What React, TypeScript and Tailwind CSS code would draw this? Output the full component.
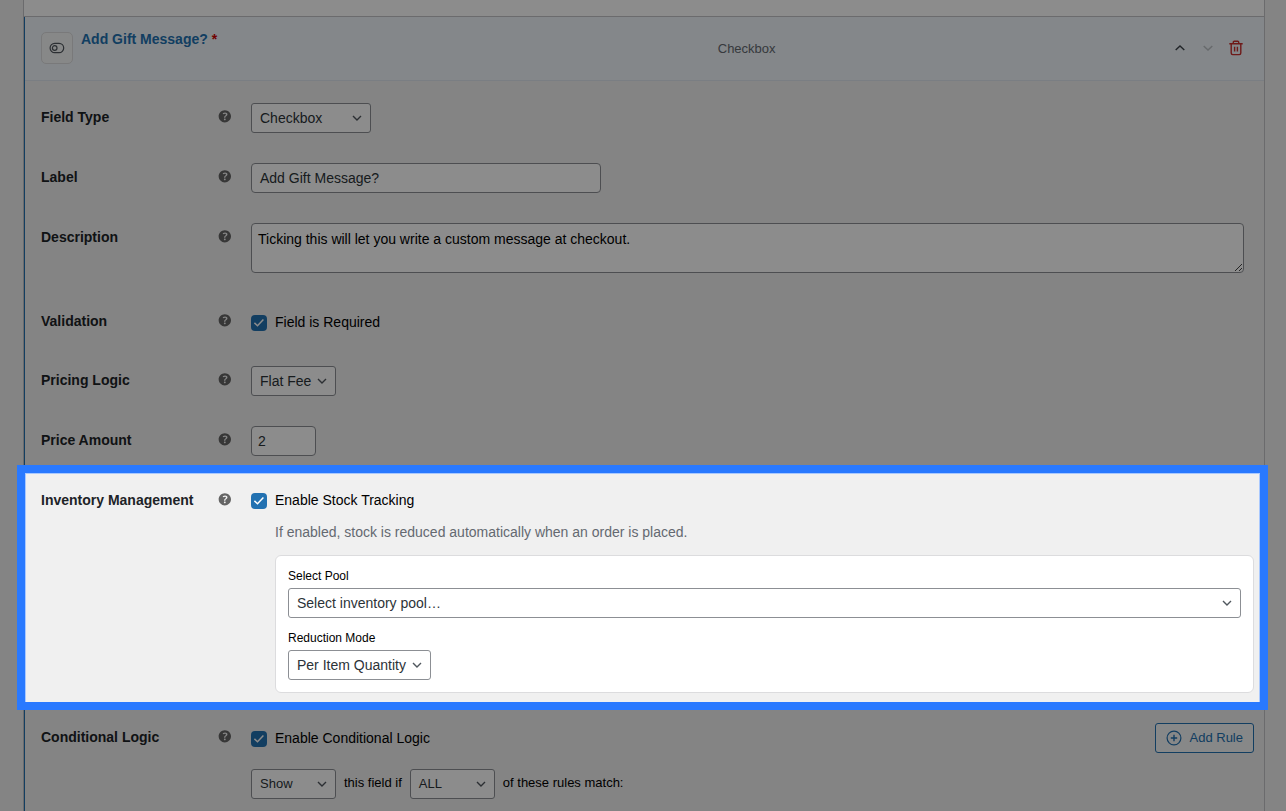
import type { ReactNode } from 'react';

function HelpIcon() {
  return (
    <svg viewBox="0 -0.6 20.4 20.4" className="mt-1 ml-[-3px] h-[18px] w-[18px]" fill="#646464">
      <path d="M17 10c0-3.87-3.14-7-7-7-3.87 0-7 3.13-7 7s3.13 7 7 7c3.86 0 7-3.13 7-7zm-6.3 1.48H9.14v-.43c0-.38.08-.7.24-.98s.46-.57.88-.89c.41-.29.68-.53.81-.71.14-.18.2-.39.2-.62 0-.25-.09-.44-.28-.58-.19-.13-.45-.19-.79-.19-.58 0-1.25.19-2 .57l-.64-1.28c.87-.49 1.8-.74 2.77-.74.81 0 1.45.2 1.92.58.48.39.71.91.71 1.55 0 .43-.09.8-.29 1.11-.19.32-.57.67-1.11 1.06-.38.28-.61.49-.71.63-.1.15-.15.34-.15.57v.35zm-1.47 2.74c-.18-.17-.27-.42-.27-.73 0-.33.08-.58.26-.75s.43-.25.77-.25c.32 0 .57.09.75.26s.27.42.27.74c0 .3-.09.55-.27.72-.18.18-.43.27-.75.27-.33 0-.58-.09-.76-.26z" />
    </svg>
  );
}

function Chevron() {
  return (
    <svg viewBox="0 0 16 16" className="h-4 w-4 shrink-0" fill="none" stroke="#50575e" strokeWidth="1.4">
      <path d="M4 6l4 4 4-4" />
    </svg>
  );
}

function Select({ children, className }: { children: ReactNode; className: string }) {
  return (
    <div
      className={`flex h-[30px] shrink-0 items-center justify-between rounded-[3px] border border-[#8c8f94] bg-white pl-2 pr-[5px] whitespace-nowrap text-[#2c3338] ${className}`}
    >
      <span>{children}</span>
      <Chevron />
    </div>
  );
}

function Check({ children, className }: { children: ReactNode; className: string }) {
  return (
    <div className={`flex h-5 items-center gap-2 leading-5 text-black ${className}`}>
      <span className="mt-[2px] flex h-4 w-4 items-center justify-center rounded-[4px] bg-[#2271b1]">
        <svg viewBox="0 0 16 16" className="h-4 w-4" fill="none" stroke="#fff" strokeWidth="1.5">
          <path d="M3.4 7.9l3.1 2.8 5.9-6.1" />
        </svg>
      </span>
      <span>{children}</span>
    </div>
  );
}

function Row({ label, className, children }: { label: string; className: string; children: ReactNode }) {
  return (
    <div className={`grid grid-cols-[178px_32px_1fr] items-start ${className}`}>
      <div className="pt-1 font-bold leading-5 text-[#1d2327]">{label}</div>
      <HelpIcon />
      <div className="min-w-0">{children}</div>
    </div>
  );
}

export default function App() {
  return (
    <div className="relative h-[811px] w-[1286px] overflow-hidden bg-[#f0f0f0] pl-[23px] pr-[21px] font-['Liberation_Sans',Arial,sans-serif] text-[14px]">
      <div className="flex h-full flex-col border-x border-[#c3c4c7]">
        <div className="h-4 shrink-0 bg-white" />
        <div className="h-px shrink-0 bg-[#c3c4c7]" />
        <div className="min-h-0 flex-1 border-l border-[#2271b1]">
          <header className="flex h-16 items-center border-b border-[#dfe5ee] bg-[#f0f6fb] pb-px pl-4 pr-5">
            <div className="flex h-8 w-8 shrink-0 items-center justify-center rounded-[5px] border border-[#dcdcde] bg-[#f6f7f7]">
              <svg viewBox="0 0 16 12" className="h-3 w-4" fill="none" stroke="#50575e" strokeWidth="1.2">
                <rect x="1.1" y="1.3" width="13.6" height="9.4" rx="4.7" />
                <circle cx="5.7" cy="6" r="2.3" />
              </svg>
            </div>
            <div className="ml-2 w-[636.75px] shrink-0 self-start pt-3 font-bold leading-5 text-[#2271b1]">
              Add Gift Message? <span className="text-[#d00000]">*</span>
            </div>
            <div className="flex-1 pt-px text-[13px] leading-5 text-[#646970]">Checkbox</div>
            <div className="flex items-center gap-3">
              <svg viewBox="0 0 16 16" className="h-4 w-4" fill="none" stroke="#3c434a" strokeWidth="1.4">
                <path d="M3.7 10L8 5.9l4.3 4.1" />
              </svg>
              <svg viewBox="0 0 16 16" className="h-4 w-4" fill="none" stroke="#bcc1c5" strokeWidth="1.4">
                <path d="M3.7 6L8 10.1 12.3 6" />
              </svg>
              <svg viewBox="0 0 16 16" className="h-4 w-4" fill="none" stroke="#c9302f" strokeWidth="1.4">
                <path d="M1.3 3.8h13.4M5.3 3.8V2.2q0-.9.9-.9h3.6q.9 0 .9.9v1.6M3.2 3.8v9.3q0 1.5 1.5 1.5h6.6q1.5 0 1.5-1.5V3.8M6.6 6.8v4.8M9.4 6.8v4.8" />
              </svg>
            </div>
          </header>

          <div className="pl-4 pr-[10px] pt-[22px]">
            <Row label="Field Type" className="h-[60px]">
              <Select className="w-[120px]">Checkbox</Select>
            </Row>
            <Row label="Label" className="h-[60px]">
              <div className="flex h-[30px] w-[350px] items-center rounded-[4px] border border-[#8c8f94] bg-white px-2 text-[#2c3338]">
                Add Gift Message?
              </div>
            </Row>
            <Row label="Description" className="h-[84px]">
              <div className="mr-[10px] flex h-[50px] rounded-[4px] border border-[#8c8f94] bg-white pl-[6px] pt-[5px] leading-5 text-black">
                <span className="flex-1">Ticking this will let you write a custom message at checkout.</span>
                <svg viewBox="0 0 9 9" className="h-[9px] w-[9px] self-end" fill="none" stroke="#444" strokeWidth="1">
                  <path d="M1 8l7-7M5 8l3-3" />
                </svg>
              </div>
            </Row>
            <Row label="Validation" className="h-[59px]">
              <Check className="mt-[5px]">Field is Required</Check>
            </Row>
            <Row label="Pricing Logic" className="h-[60px]">
              <Select className="w-[85px]">Flat Fee</Select>
            </Row>
            <Row label="Price Amount" className="h-[60px]">
              <div className="flex h-[30px] w-[65px] items-center rounded-[4px] border border-[#8c8f94] bg-white px-[6px] text-[#2c3338]">
                2
              </div>
            </Row>
            <Row label="Inventory Management" className="h-[237px]">
              <Check className="mt-1">Enable Stock Tracking</Check>
              <div className="ml-6 mt-3 leading-5 text-[#646970]">
                If enabled, stock is reduced automatically when an order is placed.
              </div>
              <div className="ml-6 mt-[13px] h-[138px] rounded-[6px] border border-[#dcdcde] bg-white p-3 text-black">
                <div className="mb-1 text-[12px] leading-4">Select Pool</div>
                <Select className="w-full">Select inventory pool…</Select>
                <div className="mb-1 mt-3 text-[12px] leading-4">Reduction Mode</div>
                <Select className="w-[143px]">Per Item Quantity</Select>
              </div>
            </Row>
            <Row label="Conditional Logic" className="h-[88px]">
              <div className="flex items-start justify-between">
                <Check className="mt-[5px]">Enable Conditional Logic</Check>
                <div className="flex h-[30px] w-[99px] items-center rounded-[3px] border border-[#2271b1] bg-[#f6f7f7] pl-[10px] text-[13px] text-[#2271b1]">
                  <svg viewBox="0 0 16 16" className="mr-[7.5px] h-4 w-4" fill="none" stroke="#2271b1" strokeWidth="1.2">
                    <circle cx="8" cy="8" r="6.9" />
                    <path d="M8 4.8v6.4M4.8 8h6.4" strokeWidth="1.4" />
                  </svg>
                  Add Rule
                </div>
              </div>
              <div className="mt-4 flex items-center gap-2 text-[13px] text-black">
                <Select className="w-[85px]">Show</Select>
                <span className="mb-[2px]">this field if</span>
                <Select className="w-[85px]">ALL</Select>
                <span className="mb-[2px]">of these rules match:</span>
              </div>
            </Row>
          </div>
        </div>
      </div>

      {/* Spotlight frame that dims everything outside it */}
      <div className="pointer-events-none absolute left-[17px] top-[465px] h-[245px] w-[1251px] border-8 border-[#2979ff] shadow-[0_0_0_1400px_rgba(0,0,0,0.45),inset_1px_1px_0_#a9c9ff,inset_-1px_0_0_#a9c9ff]" />
    </div>
  );
}
